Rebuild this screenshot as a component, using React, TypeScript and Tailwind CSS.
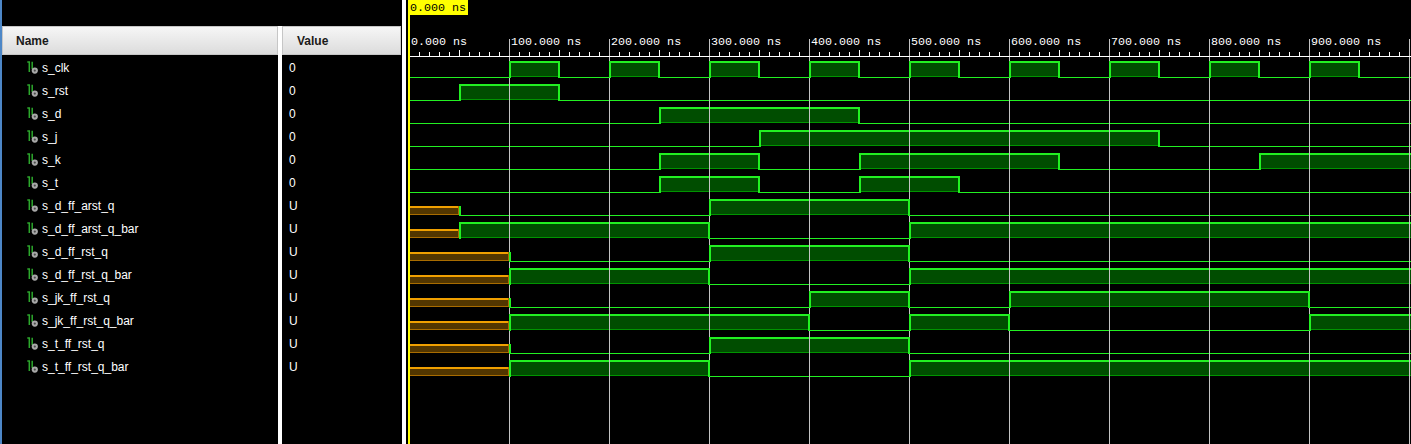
import React from "react"

type Lvl = "H" | "L" | "U"
type Seg = [number, number, Lvl]

const END = 1010
const ROW_H = 23
const ROW0 = 56

const sq = (edges: number[], start: Lvl): Seg[] => {
  // edges: list of toggle times, starting level given
  const out: Seg[] = []
  let t = 0
  let lvl: Lvl = start
  for (const e of edges) {
    out.push([t, e, lvl])
    t = e
    lvl = lvl === "H" ? "L" : "H"
  }
  out.push([t, END, lvl])
  return out
}

const withU = (u: number, rest: Seg[]): Seg[] => [[0, u, "U"], ...rest.map(([a, b, l]) => [Math.max(a, u), b, l] as Seg).filter(([a, b]) => b > a)]

const signals: { name: string; value: string; segs: Seg[] }[] = [
  { name: "s_clk", value: "0", segs: sq([100, 150, 200, 250, 300, 350, 400, 450, 500, 550, 600, 650, 700, 750, 800, 850, 900, 950], "L") },
  { name: "s_rst", value: "0", segs: sq([50, 150], "L") },
  { name: "s_d", value: "0", segs: sq([250, 450], "L") },
  { name: "s_j", value: "0", segs: sq([350, 750], "L") },
  { name: "s_k", value: "0", segs: sq([250, 350, 450, 650, 850], "L") },
  { name: "s_t", value: "0", segs: sq([250, 350, 450, 550], "L") },
  { name: "s_d_ff_arst_q", value: "U", segs: withU(50, sq([300, 500], "L")) },
  { name: "s_d_ff_arst_q_bar", value: "U", segs: withU(50, sq([300, 500], "H")) },
  { name: "s_d_ff_rst_q", value: "U", segs: withU(100, sq([300, 500], "L")) },
  { name: "s_d_ff_rst_q_bar", value: "U", segs: withU(100, sq([300, 500], "H")) },
  { name: "s_jk_ff_rst_q", value: "U", segs: withU(100, sq([400, 500, 600, 900], "L")) },
  { name: "s_jk_ff_rst_q_bar", value: "U", segs: withU(100, sq([400, 500, 600, 900], "H")) },
  { name: "s_t_ff_rst_q", value: "U", segs: withU(100, sq([300, 500], "L")) },
  { name: "s_t_ff_rst_q_bar", value: "U", segs: withU(100, sq([300, 500], "H")) },
]

const X = (t: number) => 3 + t

const GREEN = "#22f022"

function SignalIcon() {
  return (
    <svg width="12" height="13" viewBox="0 0 12 13" className="shrink-0">
      <path d="M0.3 1 H2.3 V11" stroke="#2ca82c" strokeWidth="1.5" fill="none" />
      <path d="M5.2 0.8 V8" stroke="#2ca82c" strokeWidth="1.5" fill="none" />
      <circle cx="7.8" cy="9.6" r="3.1" fill="#a8a8a8" />
      <circle cx="7.8" cy="9.6" r="1.1" fill="#4a4a4a" />
    </svg>
  )
}

function Row({ segs, r }: { segs: Seg[]; r: number }) {
  const T = ROW0 + ROW_H * r
  const hy = T + 5
  const ly = T + 21
  const uy = T + 12
  const topOf = (l: Lvl) => (l === "H" ? hy : l === "U" ? uy : ly)
  return (
    <g>
      {segs.map(([a, b, l], i) => {
        const x1 = X(a)
        const x2 = X(b)
        if (l === "H")
          return (
            <g key={i}>
              <rect x={x1} y={hy} width={x2 - x1} height={ly - hy} fill="#004d00" />
              <rect x={x1} y={hy} width={x2 - x1} height={2} fill={GREEN} />
              <rect x={x1} y={ly - 1} width={x2 - x1} height={1} fill="#009400" />
            </g>
          )
        if (l === "U")
          return (
            <g key={i}>
              <rect x={x1} y={uy} width={x2 - x1} height={ly - uy} fill="#523600" />
              <rect x={x1} y={uy} width={x2 - x1} height={2} fill="#f0a000" />
              <rect x={x1} y={ly - 1} width={x2 - x1} height={1} fill="#a86c00" />
              <rect x={x2 - 1} y={uy} width={1} height={ly - uy} fill="#a86c00" />
            </g>
          )
        return <rect key={i} x={x1} y={ly} width={x2 - x1} height={1} fill={GREEN} />
      })}
    </g>
  )
}

function Edges({ segs, r }: { segs: Seg[]; r: number }) {
  const T = ROW0 + ROW_H * r
  const hy = T + 5
  const ly = T + 21
  const uy = T + 12
  const topOf = (l: Lvl) => (l === "H" ? hy : l === "U" ? uy : ly)
  return (
    <g>
      {segs.slice(1).map(([a, , l], i) => {
        const prev = segs[i][2]
        const y1 = Math.min(topOf(prev), topOf(l))
        const x = prev === "H" ? X(a) - 1 : X(a)
        return <rect key={i} x={x} y={y1} width={2} height={ly + 1 - y1} fill={GREEN} />
      })}
    </g>
  )
}

function Waves() {
  const W = 1005
  const minor = []
  for (let i = 1; i <= 100; i++) {
    if (i % 10 === 0) continue
    const y = i % 5 === 0 ? 50 : 52
    minor.push(<rect key={i} x={X(i * 10)} y={y} width={1} height={56 - y} fill="#fff" />)
  }
  return (
    <svg width={W} height={444} className="block shrink-0">
      <rect x={0} y={0} width={W} height={444} fill="#000" />
      {signals.map((s, r) => (
        <Row key={s.name} segs={s.segs} r={r} />
      ))}
      {Array.from({ length: 10 }, (_, k) => (
        <rect key={k} x={X((k + 1) * 100)} y={39} width={1} height={405} fill="#c4c4c4" />
      ))}
      {signals.map((s, r) => (
        <Edges key={s.name} segs={s.segs} r={r} />
      ))}
      {minor}
      <rect x={4} y={56} width={W} height={1} fill="#fff" />
      {Array.from({ length: 10 }, (_, k) => (
        <text key={k} x={X(k * 100) + 2} y={45} fill="#fff" fontFamily="'Liberation Mono', monospace" fontSize="11.7">
          {(k * 100).toFixed(3)} ns
        </text>
      ))}
      <rect x={2} y={0} width={2} height={444} fill="#ffff00" />
      <rect x={3} y={0} width={59} height={15} fill="#ffff00" />
      <text x={4} y={11} fill="#000" fontFamily="'Liberation Mono', monospace" fontSize="11.7">
        0.000 ns
      </text>
    </svg>
  )
}

export default function App() {
  return (
    <main className="flex h-[444px] w-[1411px] overflow-hidden bg-black font-['Liberation_Sans',Arial,sans-serif]">
      <div className="w-[2px] shrink-0 bg-[#4d87c7]" />

      <div className="flex w-[276px] shrink-0 flex-col">
        <div className="h-[26px]" />
        <div className="mb-[1px] flex h-[29px] items-center border border-[#c6c6c6] bg-gradient-to-b from-[#f6f6f6] to-[#dcdcdc] pl-[13px] text-[12px] font-bold text-[#1a1a1a]">
          Name
        </div>
        {signals.map((s) => (
          <div key={s.name} className="flex h-[23px] items-center gap-[3px] pl-[25px] text-[12px] text-white">
            <SignalIcon />
            <span>{s.name}</span>
          </div>
        ))}
      </div>

      <div className="flex w-[4px] shrink-0 flex-col">
        <div className="h-[26px]" />
        <div className="flex-1 bg-white" />
      </div>

      <div className="flex w-[119px] shrink-0 flex-col">
        <div className="h-[26px]" />
        <div className="mb-[1px] flex h-[29px] items-center border border-[#c6c6c6] bg-gradient-to-b from-[#f6f6f6] to-[#dcdcdc] pl-[14px] text-[12px] font-bold text-[#1a1a1a]">
          Value
        </div>
        {signals.map((s) => (
          <div key={s.name} className="flex h-[23px] items-center pl-[7px] text-[12px] text-white">
            {s.value}
          </div>
        ))}
      </div>

      <div className="w-[1px] shrink-0" />
      <div className="w-[4px] shrink-0 bg-white" />
      <Waves />
    </main>
  )
}
